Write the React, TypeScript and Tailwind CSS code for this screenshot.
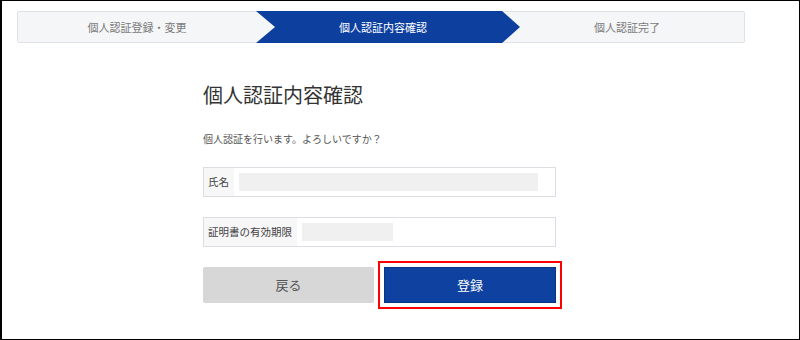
import React from 'react'

const font = "font-['Noto_Sans_CJK_JP','Noto_Sans',sans-serif]"

function Stepper() {
  return (
    <div className="ml-[15px] mt-[10px] flex h-[32px] w-[728px] rounded-[2px] border border-[#dfe1e6] bg-[#f5f6f8] text-[11px]">
      <div className="flex w-[238px] items-center justify-center text-[#7a7a7a]">個人認証登録・変更</div>
      <div className="-my-px flex w-[264px] items-center justify-center bg-[#0d3f9f] pr-[10px] text-white [clip-path:polygon(0_0,246px_0,264px_50%,246px_100%,0_100%,19px_50%)]">
        個人認証内容確認
      </div>
      <div className="-ml-[18px] flex flex-1 items-center justify-center pl-[8px] text-[#7a7a7a]">個人認証完了</div>
    </div>
  )
}

function Field({ label, valueWidth }: { label: string; valueWidth: string }) {
  return (
    <div className="flex h-[30px] items-stretch border border-[#dcdde3] bg-white">
      <div className="flex items-center bg-[#f7f7f8] pl-[4px] pr-[5px] text-[10.5px] text-[#444]">{label}</div>
      <div className="flex items-center pl-[5px]">
        <div className={`h-[18px] bg-[#f0f0f0] ${valueWidth}`} />
      </div>
    </div>
  )
}

export default function App() {
  return (
    <div className={`h-[340px] w-[800px] overflow-hidden border border-l-2 border-black bg-white ${font}`}>
      <Stepper />
      <div className="ml-[201px] mt-[38px] w-[353px]">
        <h1 className="text-[20px] leading-[28px] text-[#333]">個人認証内容確認</h1>
        <p className="mt-[22px] text-[10px] leading-[16px] text-[#555]">個人認証を行います。よろしいですか？</p>
        <div className="mt-[20px] flex flex-col gap-[20px]">
          <Field label="氏名" valueWidth="w-[299px]" />
          <Field label="証明書の有効期限" valueWidth="w-[91px]" />
        </div>
        <div className="mt-[20px] flex gap-[10px]">
          <button className="h-[36px] w-[171px] rounded-[2px] bg-[#d7d7d7] text-[13px] text-[#555]">戻る</button>
          <button className="h-[36px] w-[172px] rounded-none border border-[#0a3583] bg-[#0e41a0] text-[13px] text-white outline-2 outline-offset-[4px] outline-[#ff0000] outline-solid">
            登録
          </button>
        </div>
      </div>
    </div>
  )
}
